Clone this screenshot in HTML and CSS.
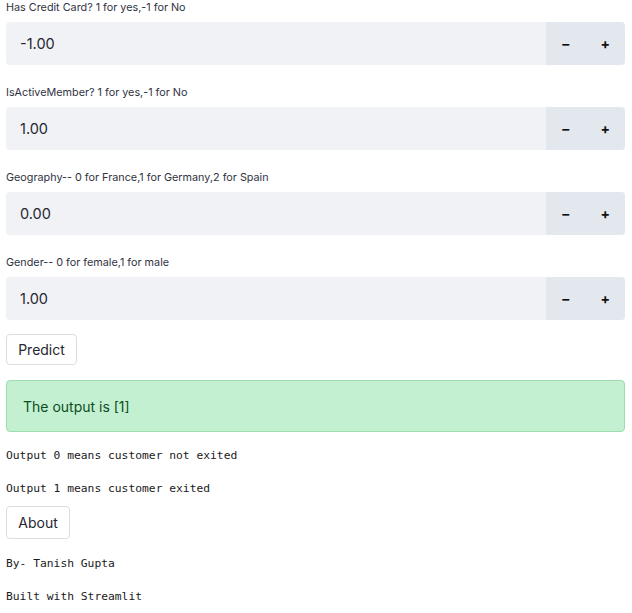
FILE: index.html
```html
<!DOCTYPE html>
<html>
<head>
<meta charset="utf-8">
<link rel="stylesheet" href="styles.css">
</head>
<body>
<div class="app">
  <div class="field">
    <div class="label">Has Credit Card? 1 for yes,-1 for No</div>
    <div class="numinput">
      <div class="value">-1.00</div>
      <div class="steps"><span class="step">&#8211;</span><span class="step">+</span></div>
    </div>
  </div>
  <div class="field">
    <div class="label">IsActiveMember? 1 for yes,-1 for No</div>
    <div class="numinput">
      <div class="value">1.00</div>
      <div class="steps"><span class="step">&#8211;</span><span class="step">+</span></div>
    </div>
  </div>
  <div class="field">
    <div class="label">Geography-- 0 for France,1 for Germany,2 for Spain</div>
    <div class="numinput">
      <div class="value">0.00</div>
      <div class="steps"><span class="step">&#8211;</span><span class="step">+</span></div>
    </div>
  </div>
  <div class="field">
    <div class="label">Gender-- 0 for female,1 for male</div>
    <div class="numinput">
      <div class="value">1.00</div>
      <div class="steps"><span class="step">&#8211;</span><span class="step">+</span></div>
    </div>
  </div>
  <button class="btn btn-predict">Predict</button>
  <div class="success">The output is [1]</div>
  <p class="mono m1">Output 0 means customer not exited</p>
  <p class="mono m2">Output 1 means customer exited</p>
  <button class="btn btn-about">About</button>
  <p class="mono m3">By- Tanish Gupta</p>
  <p class="mono m4">Built with Streamlit</p>
</div>
</body>
</html>
```
FILE: styles.css
```css
html, body {
  margin: 0;
  padding: 0;
  background: #ffffff;
}
.app {
  padding: 0 7px 0 6px;
  font-family: "Inter", "Liberation Sans", sans-serif;
  color: #262730;
}
.field {
  margin-bottom: 20px;
}
.label {
  font-size: 10.8px;
  line-height: 16px;
  color: #31333f;
  margin-bottom: 6px;
}
.numinput {
  display: flex;
  height: 43px;
  background: #f0f2f6;
  border-radius: 4px;
  overflow: hidden;
}
.value {
  flex: 1;
  display: flex;
  align-items: center;
  padding-left: 14px;
  font-size: 14.5px;
  color: #262730;
}
.steps {
  display: flex;
  width: 79px;
  background: #e3e8ef;
}
.step {
  flex: 1;
  display: flex;
  align-items: center;
  justify-content: center;
  font-weight: 700;
  font-size: 14px;
  color: #111;
}
.btn {
  display: block;
  background: #fff;
  border: 1px solid #dcdde3;
  border-radius: 4px;
  font-family: "Inter", "Liberation Sans", sans-serif;
  font-size: 14px;
  color: #262730;
  padding: 0 11px;
  height: 31px;
}
.btn-predict {
  margin-top: -6px;
  width: 71px;
}
.btn-about {
  width: 64px;
  height: 33px;
  margin-top: 9px;
}
.success {
  margin-top: 15px;
  height: 52px;
  box-sizing: border-box;
  background: #c3f0d0;
  border: 1px solid #9fdcb0;
  border-radius: 4px;
  display: flex;
  align-items: center;
  padding-left: 16px;
  font-size: 14px;
  color: #0e4d23;
}
.mono {
  font-family: "DejaVu Sans Mono", "Liberation Mono", monospace;
  font-size: 11.3px;
  line-height: 16px;
  margin: 0;
  color: #1a1a1a;
}
.m1 { margin-top: 16px; }
.m2 { margin-top: 17px; }
.m3 { margin-top: 17px; }
.m4 { margin-top: 17px; }
```
